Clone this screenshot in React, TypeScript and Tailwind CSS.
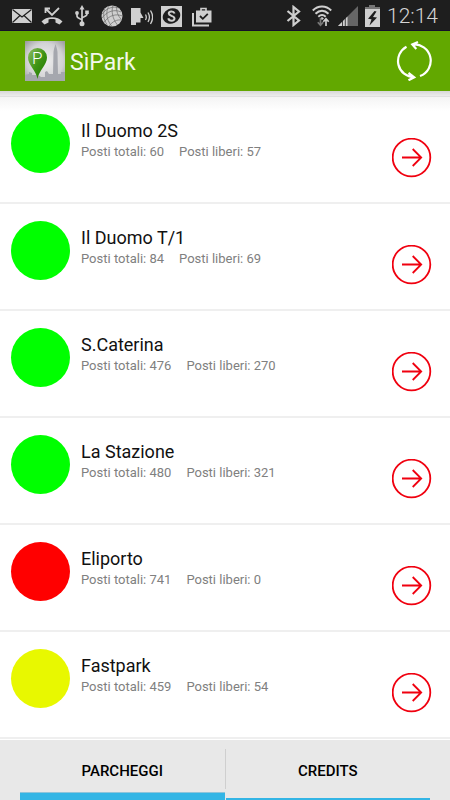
import React from 'react';

type Parking = {
  name: string;
  total: number;
  free: number;
  color: string;
};

const parkings: Parking[] = [
  { name: 'Il Duomo 2S', total: 60, free: 57, color: 'bg-[#00ff00]' },
  { name: 'Il Duomo T/1', total: 84, free: 69, color: 'bg-[#00ff00]' },
  { name: 'S.Caterina', total: 476, free: 270, color: 'bg-[#00ff00]' },
  { name: 'La Stazione', total: 480, free: 321, color: 'bg-[#00ff00]' },
  { name: 'Eliporto', total: 741, free: 0, color: 'bg-[#ff0000]' },
  { name: 'Fastpark', total: 459, free: 54, color: 'bg-[#e8f800]' },
];

const NotificationIcons = () => (
  <div className="flex gap-2 text-[#cfcfcf]">
    {/* mail */}
    <svg width="22" height="22" viewBox="0 0 22 22" fill="none">
      <rect x="1" y="4" width="20" height="14" fill="currentColor" />
      <path d="M1.500 4.500 11 12l9.500-7.500M1.500 17.500l7.500-7M20.500 17.500l-7.500-7" stroke="#1e1e1e" strokeWidth="1.200" />
    </svg>
    {/* missed call */}
    <svg width="22" height="22" viewBox="0 0 22 22" fill="none">
      <path d="M4.500 8V3.500H9M5 4l6 6 7-7" stroke="currentColor" strokeWidth="1.800" />
      <path d="M.5 16.500C5 10.800 17 10.800 21.500 16.500L18.500 19.500 14.500 17.500V14.500C12.500 13.900 9.500 13.900 7.500 14.500V17.500L3.500 19.500Z" fill="currentColor" />
    </svg>
    {/* usb */}
    <svg width="22" height="22" viewBox="0 0 22 22" fill="none">
      <path d="M11 3v15M11 15.500c0-2-5-1.500-5-4.500V8M11 13.500c0-2 5-1.500 5-4.500V7" stroke="currentColor" strokeWidth="1.700" />
      <path d="M8.500 4.500 11 0l2.500 4.500Z" fill="currentColor" />
      <circle cx="6" cy="8" r="1.900" fill="currentColor" />
      <path d="M14.200 5.500h3.600V9h-3.600z" fill="currentColor" />
      <circle cx="11" cy="18.800" r="2.500" fill="currentColor" />
    </svg>
    {/* globe */}
    <svg width="22" height="22" viewBox="0 0 22 22" fill="none">
      <circle cx="11" cy="11" r="10.500" fill="currentColor" />
      <path d="M1 9C6 2.500 13 1 17.500 3M1 13C6 6 14 4 20 7M3 17.500C8 10 15 8.500 21.500 11M8 21c4-5 8-6.500 12.500-6M8 1c-3.500 5-3 13 2.500 20M12 .500C10 6 11.500 14 16.500 20M15.500 1.500c0 5 1 9 5 13M4 3.500c-2.500 5-1.500 11 2 16" stroke="#6a6a6a" strokeWidth=".7" />
    </svg>
    {/* talking head */}
    <svg width="22" height="22" viewBox="0 0 22 22" fill="none">
      <path d="M0 3h9.500v4.500L12.500 13H9.500v4.500H5V20H0Z" fill="currentColor" />
      <path d="M14.500 9.500c1 1.800 1 3.800 0 5.500M17 7.500c1.800 3 1.800 6.500 0 9.500M19.500 5.500c2.500 4 2.500 9.500 0 13.500" stroke="currentColor" strokeWidth="1.300" />
    </svg>
    {/* S badge */}
    <svg width="22" height="22" viewBox="0 0 22 22" fill="none">
      <path d="M0 1h21v21H0z" fill="currentColor" />
      <ellipse cx="10.500" cy="11" rx="9" ry="7.500" transform="rotate(-25 10.500 11)" fill="#1e1e1e" />
      <path d="M13.600 8.500C12.500 5.500 7.500 6 7.800 8.700 8 11.200 13.500 10.500 13.500 13.500 13.300 16.500 8 16.500 7.300 13.300" stroke="currentColor" strokeWidth="2" />
    </svg>
    {/* checked bag */}
    <svg width="22" height="22" viewBox="0 0 22 22" fill="none">
      <path d="M2 8v12.500H18" stroke="currentColor" strokeWidth="2" />
      <path d="M10 6V3.500h5V6" stroke="currentColor" strokeWidth="1.600" />
      <path d="M5 5.500h15.500V17.500H5z" fill="currentColor" />
      <path d="m9 11 2.800 2.800 5-5" stroke="#1e1e1e" strokeWidth="1.800" />
    </svg>
  </div>
);

const SystemIcons = () => (
  <div className="flex gap-[6px] text-[#cfcfcf]">
    {/* bluetooth */}
    <svg width="20" height="22" viewBox="0 0 20 22" fill="none">
      <path d="M1.500 6 13 15.500 7.500 20V2L13 6.500 1.500 16" stroke="currentColor" strokeWidth="2.200" />
    </svg>
    {/* wifi */}
    <svg width="20" height="22" viewBox="0 0 20 22" fill="none">
      <path d="M.8 5.500C6 .2 14 .2 19.200 5.500M3.500 8.700c4-3.800 9-3.800 13 0M6.300 11.700c2.500-2.200 5-2.200 7.400 0" stroke="currentColor" strokeWidth="2" />
      <path d="m8 13.500 2-1.500 2 1.500-2 1.500Z" fill="currentColor" />
      <path d="M8.500 13v7M5.800 17.300l2.700 3 2.700-3" stroke="#777" strokeWidth="1.700" />
      <path d="M14 21v-7M11.300 16.700l2.700-3 2.700 3" stroke="currentColor" strokeWidth="1.700" />
    </svg>
    {/* signal */}
    <svg width="20" height="22" viewBox="0 0 20 22" fill="none">
      <path d="M20 1v20H0Z" fill="#666" />
      <path d="M9.500 11.500V21H0Z" fill="currentColor" />
      <path d="M4.500 14v8M7.300 11v11" stroke="#1e1e1e" strokeWidth=".8" />
    </svg>
    {/* battery */}
    <svg width="16" height="22" viewBox="0 0 16 22" fill="none">
      <path d="M5 0h6v2h5v3H1V2h4z" fill="#777" />
      <path d="M1 4h15v18H1z" fill="currentColor" />
      <path d="M10.500 6 4 13.800l3.500.5-2 6.200L13 12.500l-4-.5 3.500-5.500Z" fill="#1e1e1e" />
    </svg>
    <span className="ml-px text-[21px] leading-[22px] font-light text-[#d5d5d5]">12:14</span>
  </div>
);

const Logo = () => (
  <svg width="40" height="40" viewBox="0 0 40 40" fill="none">
    <defs>
      <radialGradient id="sky" cx=".5" cy=".5" r=".75">
        <stop offset="0" stopColor="#f0f0f0" />
        <stop offset=".6" stopColor="#d2d2d4" />
        <stop offset="1" stopColor="#8d8d90" />
      </radialGradient>
      <linearGradient id="pin" x1="0" y1="0" x2="1" y2="1">
        <stop offset="0" stopColor="#8fbd63" />
        <stop offset=".5" stopColor="#3f9415" />
        <stop offset="1" stopColor="#1f7600" />
      </linearGradient>
    </defs>
    <path d="M0 0h40v40H0z" fill="url(#sky)" />
    <path d="M0 40V34l4-1v-2l3 1v2h6l3 2h4v-5l2-1 2 3h4l.5-22L29 8l1.500-5L32 8l.5 3L33 33h3v-2h4v9Z" fill="#a5a7ae" />
    <path d="M12.500 38C11 29 3 24 3 16.500a9.500 9.500 0 0 1 19 0C22 24 14 29 12.500 38Z" fill="url(#pin)" />
    <text x="7" y="23" fontSize="17" fontWeight="300" fill="#fff">P</text>
  </svg>
);

const ParkingRow: React.FC<Parking> = ({ name, total, free, color }) => {
  return (
    <li className="flex h-[107px] items-start border-b-2 border-[#efefef] pt-[17px] pr-[18px] pl-[11px]">
      <span className={`size-[59px] shrink-0 rounded-full ${color}`} />
      <div className="ml-[11px] flex-1 pt-[5px]">
        <h2 className="text-[18px] leading-[23px] text-[#111]">{name}</h2>
        <p className="flex gap-[15px] text-[13px] leading-[20px] text-[#808080]">
          <span>Posti totali: {total}</span>
          <span>Posti liberi: {free}</span>
        </p>
      </div>
      <button type="button" aria-label={`Apri ${name}`} className="mt-6 size-10 shrink-0">
        <svg width="40" height="40" viewBox="0 0 40 40" fill="none" stroke="#f0000f">
          <circle cx="19.500" cy="19.500" r="18.800" strokeWidth="1.800" />
          <path d="M10 19.500h19M20.700 11l8.500 8.500-8.500 8.500" strokeWidth="1.800" />
        </svg>
      </button>
    </li>
  );
};

export default function App() {
  return (
    <div className="flex min-h-screen flex-col bg-white font-[Roboto,sans-serif]">
      <div className="flex h-[31px] items-start justify-between border-b border-[#15102a] bg-[#1e1e1e] pt-[5px] pr-3 pl-[11px]">
        <NotificationIcons />
        <SystemIcons />
      </div>

      <header className="flex h-[60px] items-center bg-[#62a800] pr-[18px] pl-[25px]">
        <Logo />
        <h1 className="ml-[5px] flex-1 pt-[3px] text-[23px] leading-[30px] text-[#f3f8ec]">SìPark</h1>
        <button type="button" aria-label="Aggiorna" className="size-10">
          <svg width="40" height="40" viewBox="0 0 40 40" fill="none" stroke="#fff" strokeWidth="2.200">
            <path d="M14.500 5.700A16.300 16.300 0 0 0 22 36.300M16.500 32l5.700 4.300-5.700 3" />
            <path d="M28 35A16.300 16.300 0 0 0 20.500 3.500M26 1l-5.700 2.500L24.300 8" />
          </svg>
        </button>
      </header>

      <div className="h-[6px] border-b border-[#e0e0e0] bg-linear-to-b from-[#d8d8d8] to-[#ececec]" />

      <ul className="flex-1 bg-linear-to-b from-[#f4f4f4] to-white to-[14px]">
        {parkings.map((parking) => (
          <ParkingRow key={parking.name} {...parking} />
        ))}
      </ul>

      <nav className="flex h-[60px] bg-[#e8e8e8] px-5 text-[15px] font-medium text-black">
        <button type="button" className="flex flex-1 flex-col justify-between">
          <span className="w-full pt-[21px] leading-[20px]">PARCHEGGI</span>
          <span className="h-[8px] w-full border-t border-[#8fc4da] bg-[#33b5e5]" />
        </button>
        <span className="mt-[9px] h-10 w-px bg-[#cfcfcf]" />
        <button type="button" className="flex flex-1 flex-col justify-between">
          <span className="w-full pt-[21px] leading-[20px]">CREDITS</span>
          <span className="h-[2px] w-full bg-[#33b5e5]" />
        </button>
      </nav>
    </div>
  );
}
